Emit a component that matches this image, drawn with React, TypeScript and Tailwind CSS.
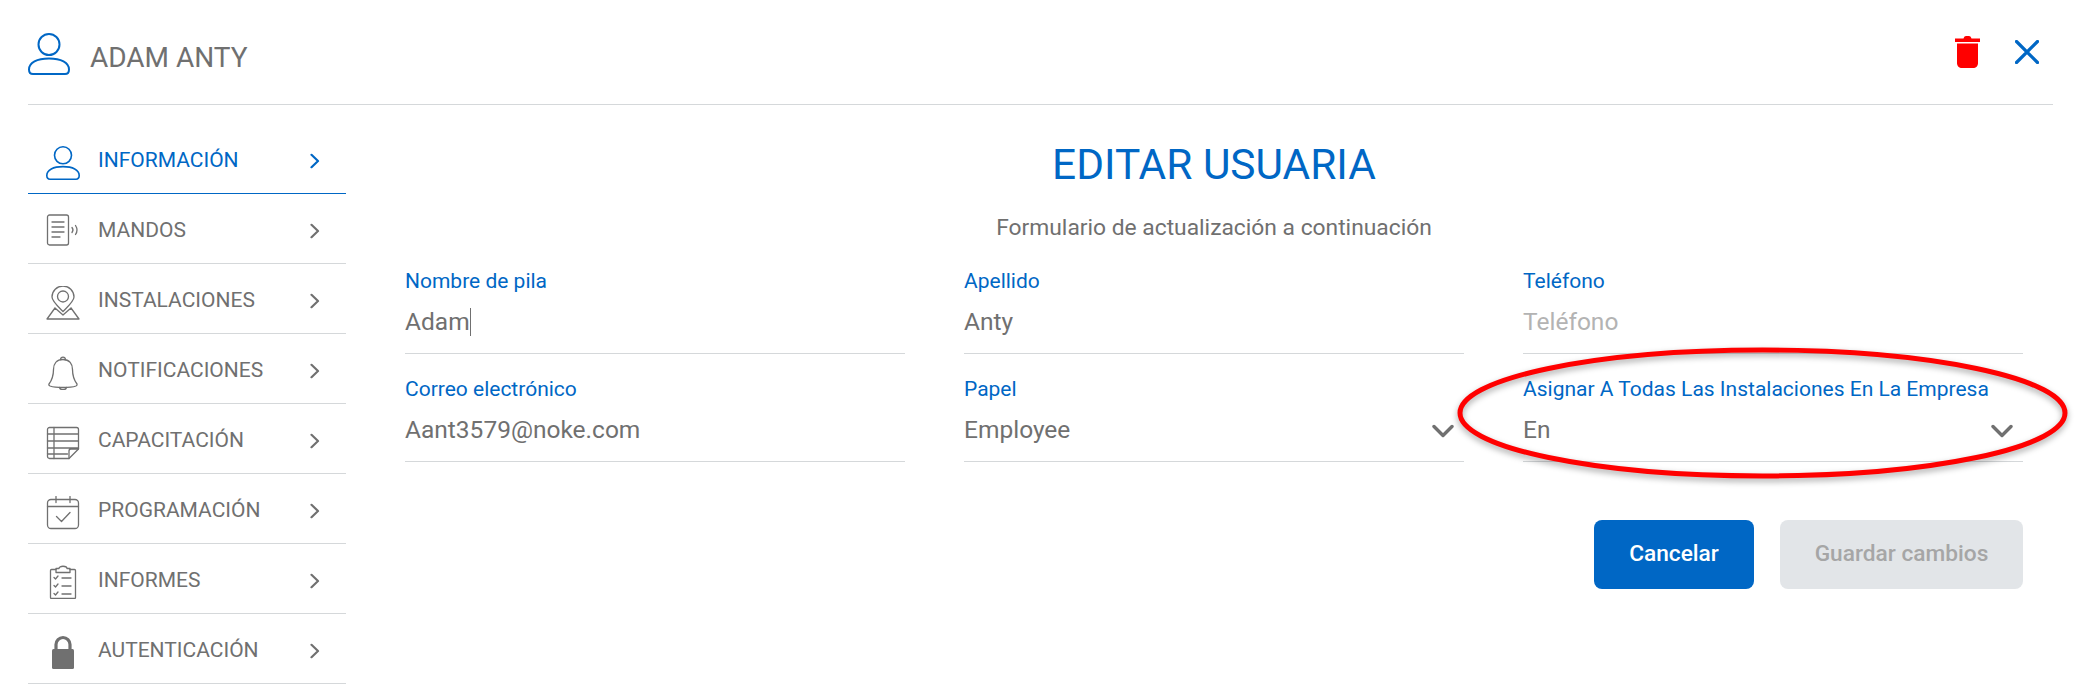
import React from "react";

const Chevron = ({ blue }: { blue?: boolean }) => (
  <svg width="10" height="16" viewBox="0 0 10 16" fill="none" stroke={blue ? "#0067c5" : "#707070"} strokeWidth="2.2" strokeLinecap="round" strokeLinejoin="round">
    <path d="M1.5 1.8 8 8l-6.5 6.2" />
  </svg>
);

const Person = ({ size, color }: { size: number; color: string }) => (
  <svg width={size} height={size} viewBox="0 0 42 42" fill="none" stroke={color} strokeWidth="2">
    <circle cx="21" cy="11.5" r="10.5" />
    <path d="M1 36.5C1 29.5 9 25.5 21 25.5s20 4 20 11c0 3-1.3 4.5-4 4.5H5c-2.7 0-4-1.500-4-4.500Z" />
  </svg>
);

const G = "#707070";
const iconProps = { width: 34, height: 34, viewBox: "0 0 34 34", fill: "none", stroke: G, strokeWidth: 1.3, strokeLinecap: "round" as const, strokeLinejoin: "round" as const };

const Mandos = () => (
  <svg {...iconProps} className="-mt-[3px]">
    <rect x="1.500" y="2" width="21" height="30" rx="2" />
    <path d="M6 9h12M6 14h12M6 19h12M6 24h8" />
    <path d="M26 14.500c1.200 1.500 1.200 3.500 0 5M29.500 12.500c2 3 2 6 0 9" />
  </svg>
);
const Pin = () => (
  <svg {...iconProps}>
    <path d="M17 25.500C11 19.500 6 15 6 11a11 11 0 0 1 22 0c0 4-5 8.500-11 14.500Z" />
    <circle cx="17" cy="10.500" r="5.500" />
    <path d="M9 22 1 33h32l-8-11M9 22l8 7 8-7" />
  </svg>
);
const Bell = () => (
  <svg {...iconProps}>
    <path d="M17 3.500c-6.500 0-9.500 4.500-9.500 10 0 7-1.500 10.500-4.500 14.500-.5 1 0 1.500 1 2 3.500 1.200 8 1.500 13 1.500s9.500-.3 13-1.500c1-.5 1.500-1 1-2-3-4-4.500-7.500-4.500-14.500 0-5.500-3-10-9.500-10Z" />
    <path d="M14.500 3.500c.3-3.200 4.700-3.200 5 0M13.500 31.500c.8 3 6.200 3 7 0" />
  </svg>
);
const Sheet = () => (
  <svg {...iconProps}>
    <path d="M3.500 1.500h27a2 2 0 0 1 2 2V23l-9.500 9.500H3.500a2 2 0 0 1-2-2V3.500a2 2 0 0 1 2-2Z" />
    <path d="M1.500 8h31M1.500 15h31M1.500 22h31M1.500 28h20M8 1.500v31M32.500 23H25a2 2 0 0 0-2 2v7.500" />
  </svg>
);
const Calendar = () => (
  <svg {...iconProps}>
    <rect x="1.500" y="3.500" width="31" height="29" rx="3.500" />
    <path d="M1.500 10.500h31M10 0.500v6M24 0.500v6M10.500 20.500l5 5 8.500-9" />
  </svg>
);
const Clipboard = () => (
  <svg {...iconProps} className="-mt-[1px]">
    <path d="M10 4.500H5.500a1 1 0 0 0-1 1v27a1 1 0 0 0 1 1h23a1 1 0 0 0 1-1v-27a1 1 0 0 0-1-1H24" />
    <path d="M10 7.500V3.500h3c0-3 8-3 8 0h3v4Z" />
    <path d="M8 12.500l1.500 1.500 2.500-3M16 13h9M8 20.500l1.500 1.500 2.500-3M16 21h9M8 28.500l1.500 1.500 2.500-3M16 29h9" />
  </svg>
);
const Lock = () => (
  <svg width="34" height="34" viewBox="0 0 34 34" fill="none" className="-mt-[1px]">
    <path d="M10 16V9.500a7 7 0 0 1 14 0V16" stroke="#707070" strokeWidth="3.200" />
    <rect x="6" y="14" width="22" height="20" rx="1.500" fill="#707070" />
  </svg>
);

const rows: { label: string; icon: React.ReactNode; active?: boolean }[] = [
  { label: "INFORMACIÓN", icon: <Person size={34} color="#0067c5" />, active: true },
  { label: "MANDOS", icon: <Mandos /> },
  { label: "INSTALACIONES", icon: <Pin /> },
  { label: "NOTIFICACIONES", icon: <Bell /> },
  { label: "CAPACITACIÓN", icon: <Sheet /> },
  { label: "PROGRAMACIÓN", icon: <Calendar /> },
  { label: "INFORMES", icon: <Clipboard /> },
  { label: "AUTENTICACIÓN", icon: <Lock /> },
];

const SelectChevron = () => (
  <svg width="22" height="14" viewBox="0 0 22 14" fill="none" stroke="#707070" strokeWidth="3.400" strokeLinecap="round" strokeLinejoin="round" className="mr-[10px] mt-[2px]">
    <path d="M2 2.500 11 11.500 20 2.500" />
  </svg>
);

const Field = ({ label, value, placeholder, caret, select }: { label: string; value?: string; placeholder?: string; caret?: boolean; select?: boolean }) => (
  <div className="h-[84px] border-b border-[#d5d8da] flex flex-col">
    <div className="text-[21px] leading-[24px] text-[#0067c5] mt-[-1px]">{label}</div>
    <div className="flex items-center justify-between mt-[17px] h-[24px]">
      <span className={"text-[24.5px] leading-[24px] flex items-center " + (placeholder ? "text-[#b3b3b3]" : "text-[#707070]")}>
        {value ?? placeholder}
        {caret && <span className="inline-block w-px h-[28px] bg-[#707070]" />}
      </span>
      {select && <SelectChevron />}
    </div>
  </div>
);

export default function App() {
  return (
    <div className="w-[2084px] h-[692px] bg-white relative overflow-hidden font-['Roboto',sans-serif]">
      <header className="mx-[28px] w-[2025px] h-[105px] border-b border-[#d5d8da] flex items-center">
        <div className="mt-[4px] w-[42px] h-[42px]">
          <Person size={42} color="#0067c5" />
        </div>
        <div className="ml-[20px] mt-[12px] text-[28px] text-[#707070]">ADAM ANTY</div>
        <div className="ml-auto flex items-center mr-[14px] gap-[35px]">
          <svg width="25" height="32" viewBox="0 0 25 32" fill="#ff0000">
            <path d="M8.500 2.500C9 .8 10 0 11 0h3c1 0 2 .8 2.500 2.500H25v3.400H0V2.500Z" />
            <path d="M2 7.500h21V27c0 3-2 5-5 5H7c-3 0-5-2-5-5Z" />
          </svg>
          <svg width="24" height="24" viewBox="0 0 24 24" fill="none" stroke="#0067c5" strokeWidth="3.200" strokeLinecap="round">
            <path d="M1.500 1.500 22.500 22.500M22.500 1.500 1.500 22.500" />
          </svg>
        </div>
      </header>

      <div className="flex">
        <nav className="ml-[28px] w-[318px] pt-[19px] shrink-0">
          {rows.map((r) => (
            <div key={r.label} className={"h-[70px] flex items-center border-b pt-[5px] pl-[18px] pr-[26px] " + (r.active ? "border-[#0067c5]" : "border-[#d5d8da]")}>
              <div className="w-[34px] h-[34px] mt-[4px] mr-[18px] shrink-0">{r.icon}</div>
              <span className={"text-[21px] flex-1 " + (r.active ? "text-[#0067c5]" : "text-[#707070]")}>{r.label}</span>
              <Chevron blue={r.active} />
            </div>
          ))}
        </nav>

        <main className="ml-[59px] w-[1618px]">
          <h1 className="text-center text-[42.4px] leading-[48px] text-[#0067c5] mt-[36px]">EDITAR USUARIA</h1>
          <p className="text-center text-[22.8px] leading-[28px] text-[#707070] mt-[25px]">Formulario de actualización a continuación</p>
          <div className="grid grid-cols-3 gap-x-[59px] gap-y-[24px] mt-[28px]">
            <Field label="Nombre de pila" value="Adam" caret />
            <Field label="Apellido" value="Anty" />
            <Field label="Teléfono" placeholder="Teléfono" />
            <Field label="Correo electrónico" value="Aant3579@noke.com" />
            <Field label="Papel" value="Employee" select />
            <Field label="Asignar A Todas Las Instalaciones En La Empresa" value="En" select />
          </div>
          <div className="flex justify-end gap-[26px] mt-[58px]">
            <button className="w-[160px] h-[69px] rounded-[8px] bg-[#0067c5] text-white text-[22.7px] font-medium">Cancelar</button>
            <button className="w-[243px] h-[69px] rounded-[8px] bg-[#e2e5e8] text-[#a6a6a6] text-[22.7px] font-medium">Guardar cambios</button>
          </div>
        </main>
      </div>

      <svg className="absolute left-[1450px] top-[338px] pointer-events-none" width="634" height="150" viewBox="0 0 634 150" fill="none" style={{ filter: "drop-shadow(0 3px 3px rgba(0,0,0,0.35))" }}>
        <ellipse cx="312.500" cy="75" rx="302.500" ry="63" stroke="#ff0000" strokeWidth="5" />
      </svg>
    </div>
  );
}
